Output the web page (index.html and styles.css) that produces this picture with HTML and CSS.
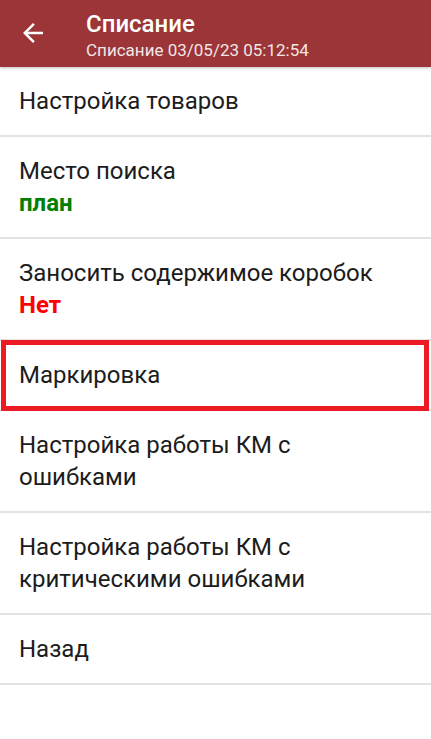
FILE: index.html
```html
<!DOCTYPE html>
<html lang="ru">
<head>
<meta charset="utf-8">
<title>Списание</title>
<link rel="stylesheet" href="styles.css">
</head>
<body>
<header class="appbar">
  <button class="back" aria-label="Назад">
    <svg width="30" height="30" viewBox="0 0 24 24"><path d="M20 11H7.83l5.59-5.59L12 4l-8 8 8 8 1.41-1.41L7.83 13H20v-2z" fill="#fff"/></svg>
  </button>
  <div class="titles">
    <div class="title">Списание</div>
    <div class="subtitle">Списание 03/05/23 05:12:54</div>
  </div>
</header>
<main class="list">
  <div class="row"><div class="label">Настройка товаров</div></div>
  <div class="row"><div class="label">Место поиска</div><div class="value green">план</div></div>
  <div class="row"><div class="label">Заносить содержимое коробок</div><div class="value red">Нет</div></div>
  <div class="row highlighted"><div class="label">Маркировка</div></div>
  <div class="row"><div class="label">Настройка работы КМ с<br>ошибками</div></div>
  <div class="row"><div class="label">Настройка работы КМ с<br>критическими ошибками</div></div>
  <div class="row"><div class="label">Назад</div></div>
</main>
</body>
</html>
```

FILE: styles.css
```css
* { box-sizing: border-box; }
html, body { margin: 0; padding: 0; background: #fff; }
body { font-family: Roboto, "Noto Sans", sans-serif; color: #1c1c1c; }

.appbar {
  height: 67px;
  background: #9b3537;
  display: flex;
  align-items: flex-start;
  color: #fff;
  box-shadow: 0 1px 3px rgba(0,0,0,0.25);
  position: relative;
  z-index: 1;
}
.back {
  width: 86px;
  height: 67px;
  padding: 0 0 0 18px;
  border: 0;
  background: none;
  display: flex;
  align-items: center;
}
.back svg { margin-top: -2px; }
.titles { display: flex; flex-direction: column; padding-top: 10px; }
.title { font-size: 24px; font-weight: 500; line-height: 29px; }
.subtitle { font-size: 17px; line-height: 22px; color: #f3e6e6; }

.list { display: flex; flex-direction: column; }
.row {
  padding: 18px 19px;
  border-bottom: 2px solid #e3e3e3;
  font-size: 24px;
  line-height: 32px;
  position: relative;
}
.value { font-weight: 700; }
.green { color: #008000; }
.red { color: #ff0000; }

.highlighted::after {
  content: "";
  position: absolute;
  top: -1px;
  left: 1px;
  right: 2px;
  bottom: -2px;
  border: 5px solid #ed1c24;
}
```
